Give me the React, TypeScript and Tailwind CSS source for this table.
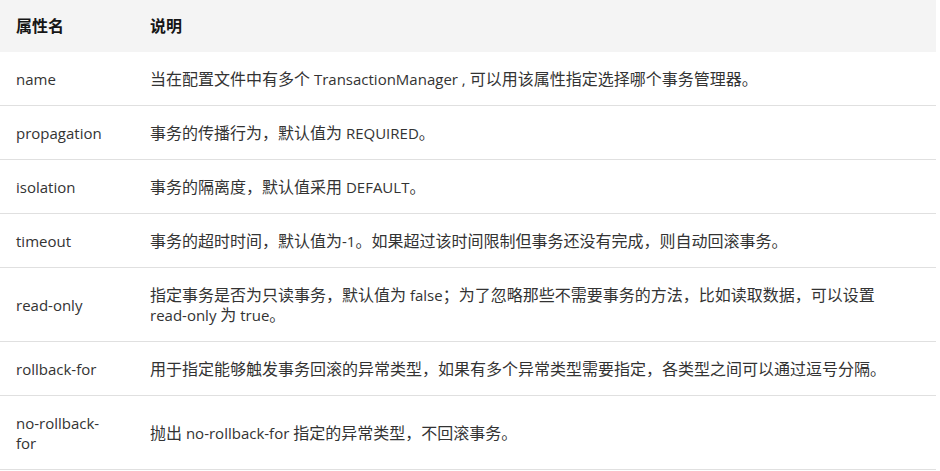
const rows: [string, string][] = [
  ["name", "当在配置文件中有多个 TransactionManager , 可以用该属性指定选择哪个事务管理器。"],
  ["propagation", "事务的传播行为，默认值为 REQUIRED。"],
  ["isolation", "事务的隔离度，默认值采用 DEFAULT。"],
  ["timeout", "事务的超时时间，默认值为-1。如果超过该时间限制但事务还没有完成，则自动回滚事务。"],
  ["read-only", "指定事务是否为只读事务，默认值为 false；为了忽略那些不需要事务的方法，比如读取数据，可以设置 read-only 为 true。"],
  ["rollback-for", "用于指定能够触发事务回滚的异常类型，如果有多个异常类型需要指定，各类型之间可以通过逗号分隔。"],
  ["no-rollback-for", "抛出 no-rollback-for 指定的异常类型，不回滚事务。"],
];

const cjk = /[\u3000-\u303f\u4e00-\u9fff\uff00-\uffef]/;

// CJK glyphs in the reference run a touch wider than the latin text
function Mixed({ text }: { text: string }) {
  const parts = text.match(/[\u3000-\u303f\u4e00-\u9fff\uff00-\uffef]+|\s+|[^\s\u3000-\u303f\u4e00-\u9fff\uff00-\uffef]+/g) ?? [];
  return (
    <>
      {parts.map((p, i) =>
        cjk.test(p) ? (
          <span key={i} className="text-[16px]">{p}</span>
        ) : /\s/.test(p) ? (
          <span key={i}>{p}</span>
        ) : (
          <span key={i} className="whitespace-nowrap">{p}</span>
        )
      )}
    </>
  );
}

export default function App() {
  return (
    <main className="w-[940px] h-[471px] bg-white overflow-hidden font-['Open_Sans','Noto_Sans_CJK_SC',sans-serif] text-[15px] leading-[20px]">
      <table className="w-[936px] table-fixed border-collapse">
        <thead>
          <tr className="bg-[#f4f4f4] text-[#161616]">
            <th className="w-[150px] h-[52px] pl-4 pr-[34px] text-left font-bold text-[16px]">属性名</th>
            <th className="h-[52px] pl-0 pr-4 text-left font-bold text-[16px]">说明</th>
          </tr>
        </thead>
        <tbody className="text-[#333333]">
          {rows.map(([k, v]) => (
            <tr key={k} className="border-b border-[#e0e0e0]">
              <td className="pl-4 pr-[34px] pt-[17px] pb-4 align-middle break-words">{k}</td>
              <td className="pl-0 pr-4 pt-[17px] pb-4 align-middle">
                <Mixed text={v} />
              </td>
            </tr>
          ))}
        </tbody>
      </table>
    </main>
  );
}
